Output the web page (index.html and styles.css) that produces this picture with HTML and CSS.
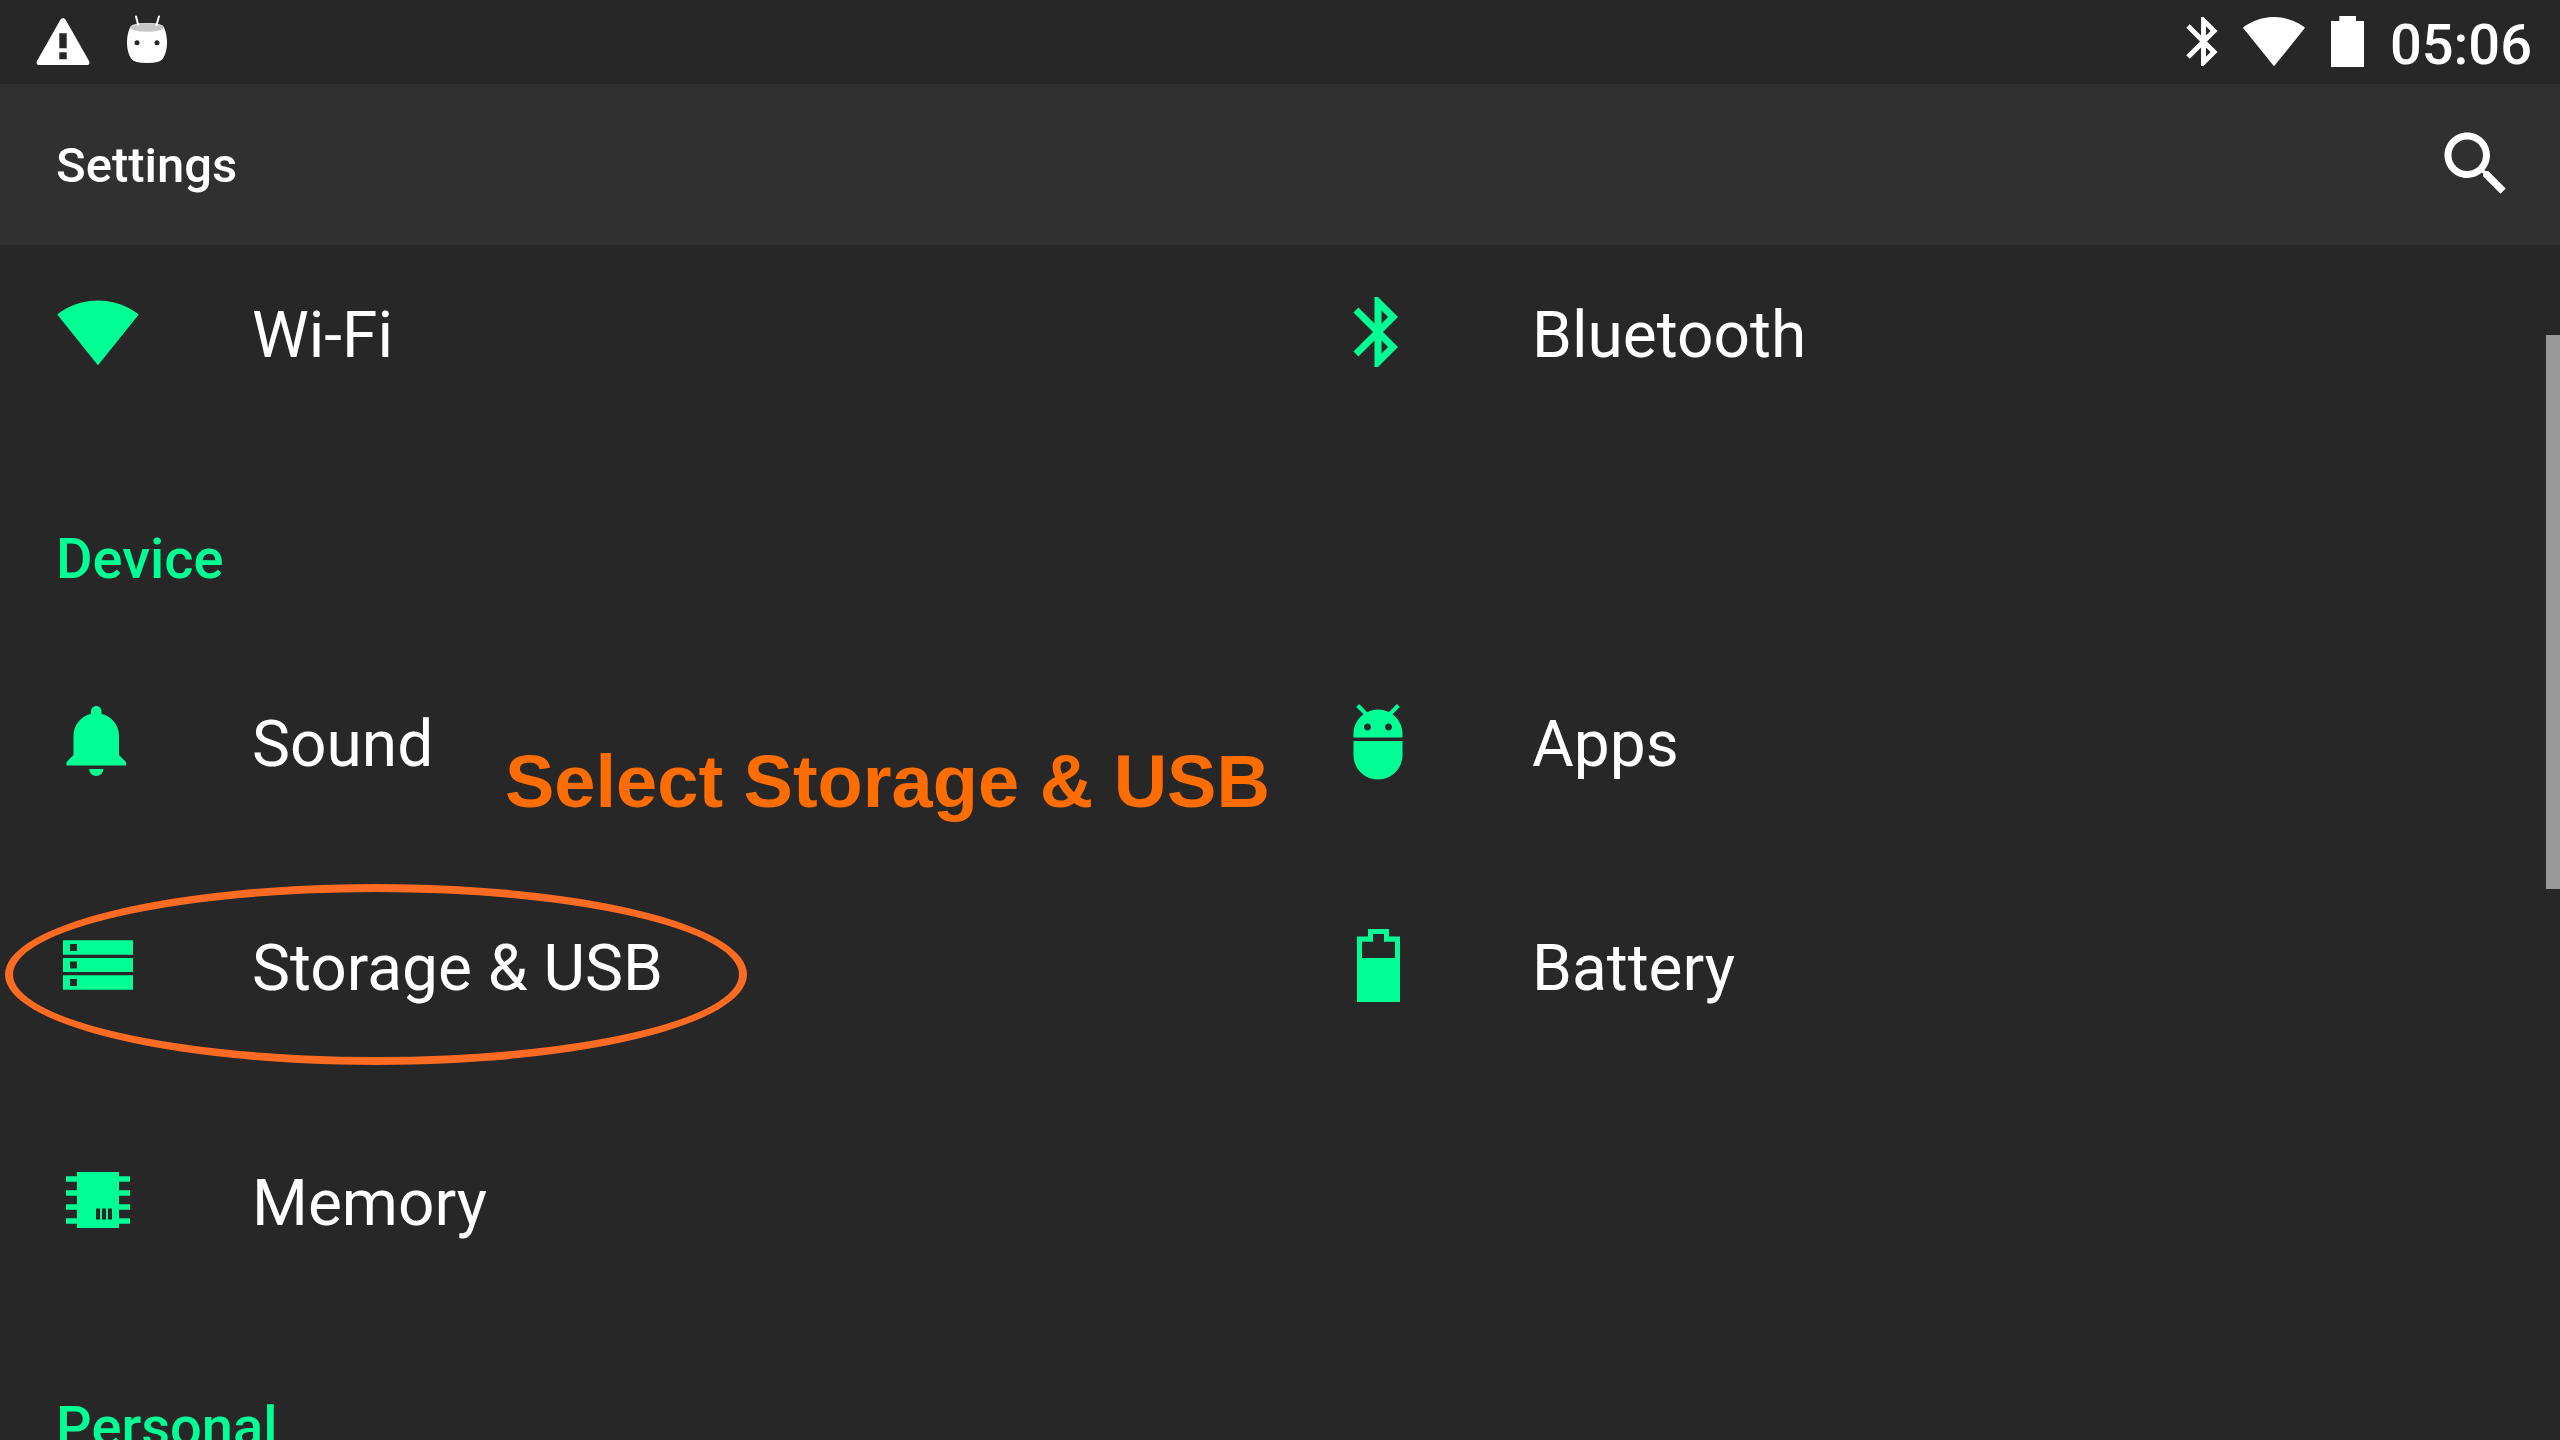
FILE: index.html
```html
<!DOCTYPE html>
<html lang="en">
<head>
<meta charset="utf-8">
<title>Settings</title>
<link rel="stylesheet" href="styles.css">
</head>
<body>
<div class="status-bar">
  <div class="status-group notifications">
    <svg class="icon-alert" viewBox="0 0 54 48" aria-hidden="true"><path fill-rule="evenodd" d="M24.500 1.500Q27 -1.500 29.500 1.500L53 43Q54.500 47 50.500 47H3.500Q-.500 47 1 43ZM23.300 15.300V30.300H30.700V15.300ZM23.300 34.300V41.300H30.700V34.300Z"/></svg>
    <svg class="icon-debug" viewBox="0 0 40 48" aria-hidden="true">
      <path d="M3 12.500Q4.500 8 20 8T37 12.500Q40 19 40 28T36 43.500Q33 48 20 48T4 43.500Q0 37 0 28T3 12.500Z"/>
      <ellipse class="debug-top" cx="20" cy="12.500" rx="17" ry="4.200"/>
      <path class="debug-antenna" d="M9 1.500L11.200 10M32 1.500L29.500 10"/>
      <circle class="debug-eye" cx="10" cy="27.700" r="2.500"/><circle class="debug-eye" cx="30" cy="27.700" r="2.500"/>
    </svg>
  </div>
  <div class="status-group system">
    <svg class="icon-bt" viewBox="0 0 24 24" aria-hidden="true"><path d="M17.710 7.710L12 2h-1v7.590L6.410 5 5 6.410 10.590 12 5 17.590 6.410 19 11 14.410V22h1l5.710-5.710-4.300-4.290 4.300-4.290zM13 5.830l1.880 1.880L13 9.590V5.830zm1.880 10.460L13 18.170v-3.760l1.880 1.880z"/></svg>
    <svg class="icon-signal" viewBox="0 0 24 24" aria-hidden="true"><path d="M12.010 21.490L23.640 7c-.450-.340-4.930-4-11.640-4C5.280 3 .810 6.660.360 7l11.630 14.490.010.010.010-.010z"/></svg>
    <svg class="icon-charge" viewBox="0 0 33 51" aria-hidden="true"><path d="M8.300 0H25V5H33V51H0V5H8.300Z"/></svg>
    <time class="clock">05:06</time>
  </div>
</div>

<header class="app-bar">
  <h1 class="title">Settings</h1>
  <button class="search" type="button" aria-label="Search">
    <svg class="icon" viewBox="0 0 24 24" aria-hidden="true"><path d="M15.500 14h-.790l-.280-.270C15.410 12.590 16 11.110 16 9.500 16 5.910 13.090 3 9.500 3S3 5.910 3 9.500 5.910 16 9.500 16c1.610 0 3.090-.590 4.230-1.570l.270.280v.790l5 4.990L20.490 19l-4.990-5zm-6 0C7.010 14 5 11.990 5 9.500S7.010 5 9.500 5 14 7.010 14 9.500 11.990 14 9.500 14z"/></svg>
  </button>
</header>

<main class="content">
  <div class="list">
    <section class="tiles">
      <a class="tile" href="#wifi">
        <svg class="icon" viewBox="0 0 24 24" aria-hidden="true"><path d="M12.010 21.490L23.640 7c-.450-.340-4.930-4-11.640-4C5.280 3 .810 6.660.360 7l11.630 14.490.010.010.010-.010z"/></svg>
        <span class="label">Wi-Fi</span>
      </a>
      <a class="tile" href="#bluetooth">
        <svg class="icon" viewBox="0 0 24 24" aria-hidden="true"><path d="M17.710 7.710L12 2h-1v7.590L6.410 5 5 6.410 10.590 12 5 17.590 6.410 19 11 14.410V22h1l5.710-5.710-4.300-4.290 4.300-4.290zM13 5.830l1.880 1.880L13 9.590V5.830zm1.880 10.460L13 18.170v-3.760l1.880 1.880z"/></svg>
        <span class="label">Bluetooth</span>
      </a>
    </section>

    <h2 class="category">Device</h2>
    <section class="tiles">
      <a class="tile" href="#sound">
        <svg class="icon" viewBox="0 0 24 24" aria-hidden="true"><path d="M11.500 22c1.100 0 2-.900 2-2h-4c0 1.100.900 2 2 2zm6.500-6v-5.500c0-3.070-2.130-5.640-5-6.320V3.500c0-.830-.670-1.500-1.500-1.500S10 2.670 10 3.500v.680c-2.870.680-5 3.250-5 6.320V16l-2 2v1h17v-1l-2-2z"/></svg>
        <span class="label">Sound</span>
      </a>
      <a class="tile" href="#apps">
        <svg class="icon" viewBox="0 0 24 24" aria-hidden="true"><path d="M5 16c0 3.870 3.130 7 7 7s7-3.130 7-7v-4H5v4zM16.120 4.370l2.100-2.100-.820-.830-2.300 2.310C14.160 3.280 13.120 3 12 3s-2.160.280-3.090.750L6.600 1.440l-.820.830 2.100 2.100C6.140 5.640 5 7.680 5 10v1h14v-1c0-2.320-1.140-4.360-2.880-5.630zM9 9c-.550 0-1-.450-1-1s.450-1 1-1 1 .450 1 1-.450 1-1 1zm6 0c-.550 0-1-.450-1-1s.450-1 1-1 1 .450 1 1-.450 1-1 1z"/></svg>
        <span class="label">Apps</span>
      </a>
      <a class="tile tall" href="#storage">
        <svg class="icon" viewBox="0 0 84 84" aria-hidden="true"><path fill-rule="evenodd" d="M7 17.300H77V31.700H7ZM14 21V28H21V21ZM7 35H77V49H7ZM14 38.500V45.500H21V38.500ZM7 52.300H77V66.700H7ZM14 56V63H21V56Z"/></svg>
        <span class="label">Storage &amp; USB</span>
        <span class="callout-text">Select Storage &amp; USB</span>
        <span class="callout-ring"></span>
      </a>
      <a class="tile tall" href="#battery">
        <svg class="icon" viewBox="0 0 84 84" aria-hidden="true"><path fill-rule="evenodd" d="M32 6H53V13.400H64V79H21V13.400H32ZM37 11V18.700H26V35H59V18.700H48V11Z"/></svg>
        <span class="label">Battery</span>
      </a>
      <a class="tile" href="#memory">
        <svg class="icon" viewBox="0 0 84 84" aria-hidden="true"><path fill-rule="evenodd" d="M21 14H63V18.300H74V23.700H63V32.300H74V37.700H63V46.300H74V51.700H63V60.300H74V65.700H63V70H21V65.700H10V60.300H21V51.700H10V46.300H21V37.700H10V32.300H21V23.700H10V18.300H21ZM40 50.500V61.500H44V50.500ZM46 50.500V61.500H50V50.500ZM52 50.500V61.500H56V50.500Z"/></svg>
        <span class="label">Memory</span>
      </a>
    </section>

    <h2 class="category">Personal</h2>
  </div>
  <div class="scroll-thumb"></div>
</main>
</body>
</html>
```

FILE: styles.css
```css
:root {
  --background: #272727;
  --bar: #303030;
  --accent: #00ff94;
}

* {
  box-sizing: border-box;
}

body {
  margin: 0;
  height: 100vh;
  display: flex;
  flex-direction: column;
  overflow: hidden;
  background: var(--background);
  color: #fff;
  font-family: Roboto, "Liberation Sans", sans-serif;
}

svg {
  display: block;
  flex: none;
  fill: currentColor;
}

.status-bar {
  flex: none;
  height: 84px;
  padding: 0 28px 0 36px;
  display: flex;
  justify-content: space-between;
}

.status-group {
  display: flex;
  align-items: center;
}

.notifications {
  gap: 37px;
}

.system {
  padding-bottom: 2px;
}

.icon-alert {
  width: 54px;
  height: 48px;
}

.icon-debug {
  width: 40px;
  height: 48px;
  margin-bottom: 6px;
}

.debug-top {
  fill: #c6c6c6;
}

.debug-antenna {
  fill: none;
  stroke: #fff;
  stroke-width: 2;
  stroke-linecap: round;
}

.debug-eye {
  fill: var(--background);
}

.icon-bt {
  width: 59px;
  height: 59px;
  margin-right: 9px;
}

.icon-signal {
  width: 64px;
  height: 64px;
  margin-right: 25px;
}

.icon-charge {
  width: 33px;
  height: 51px;
  margin-right: 26px;
}

.clock {
  font-size: 56px;
  line-height: 66px;
  font-weight: 500;
  padding-top: 8px;
}

.app-bar {
  flex: none;
  height: 161px;
  padding: 0 42px 2px 56px;
  display: flex;
  align-items: center;
  justify-content: space-between;
  background: var(--bar);
}

.title {
  margin: 0;
  padding-top: 4px;
  font-size: 49px;
  line-height: 56px;
  font-weight: 500;
}

.search {
  padding: 0;
  border: 0;
  background: none;
  color: inherit;
}

.icon {
  width: 84px;
  height: 84px;
}

.content {
  position: relative;
  flex: 1;
  min-height: 0;
  overflow: hidden;
}

/* The list rests slightly scrolled under the app bar. */
.list {
  margin-top: -25px;
}

.tiles {
  display: grid;
  grid-template-columns: 1fr 1fr;
}

.tile {
  position: relative;
  height: 224px;
  padding: 0 56px;
  display: flex;
  align-items: center;
  gap: 112px;
  color: var(--accent);
  text-decoration: none;
}

.tall {
  margin-bottom: 11px;
}

.label {
  padding-top: 8px;
  color: #fff;
  font-size: 64px;
  line-height: 76px;
}

.category {
  margin: 0;
  padding: 82px 56px 37px;
  color: var(--accent);
  font-size: 56px;
  line-height: 66px;
  font-weight: 500;
}

.callout-text {
  position: absolute;
  left: 505px;
  top: -113px;
  color: #ff6d00;
  font: bold 74px/84px "Liberation Sans", Arial, sans-serif;
  white-space: nowrap;
}

.callout-ring {
  position: absolute;
  left: 5px;
  top: 31px;
  width: 742px;
  height: 181px;
  border: 8px solid #ff6b22;
  border-radius: 50%;
}

.scroll-thumb {
  position: absolute;
  right: 0;
  top: 90px;
  width: 14px;
  height: 554px;
  background: #999;
}
```
